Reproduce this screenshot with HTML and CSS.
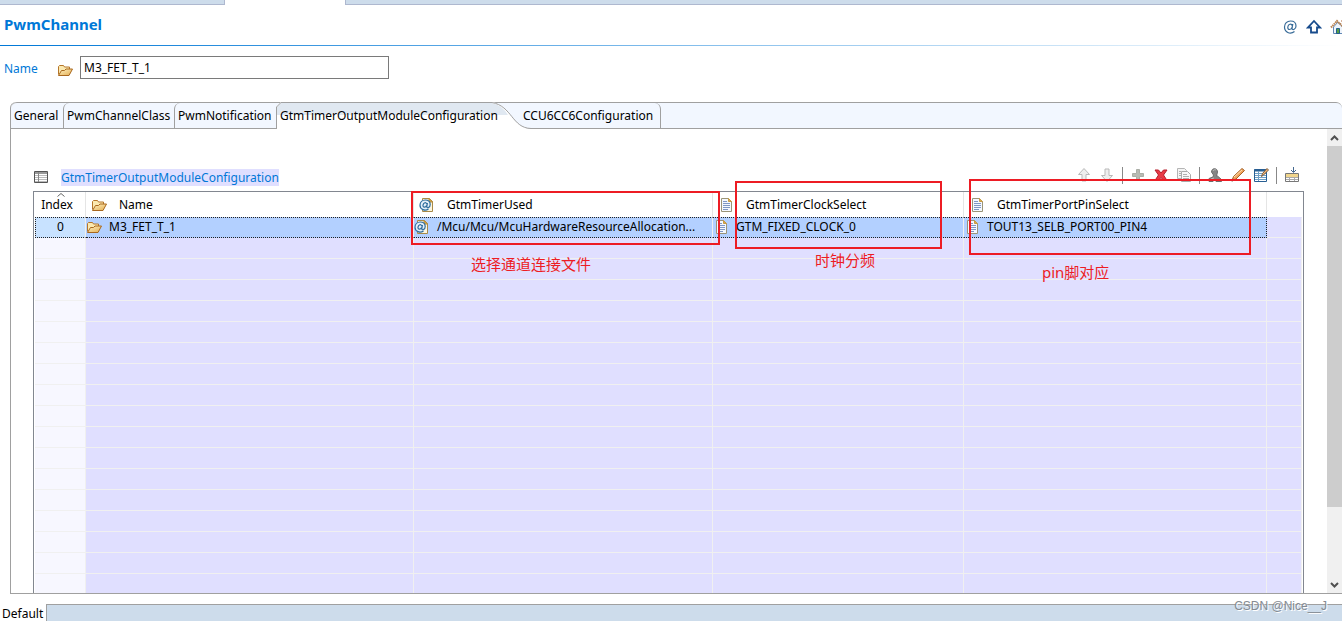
FILE: index.html
```html
<!DOCTYPE html>
<html lang="en">
<head>
<meta charset="utf-8">
<title>PwmChannel</title>
<link rel="stylesheet" href="styles.css">
</head>
<body>
<svg class="defs" aria-hidden="true">
  <defs>
    <linearGradient id="gold" x1="0" y1="0" x2="1" y2="1"><stop offset="0" stop-color="#fff3c4"/><stop offset="1" stop-color="#e3ac50"/></linearGradient>
  </defs>
  <symbol id="folder" viewBox="0 0 16 16">
    <path d="M1.500 12.500v-8l1-1h4l1 1.500h5v3" fill="#fbe9b0" stroke="#b5762a"/>
    <path d="M1.500 13.500l3-5h3l1.500-1.500h6.500l-3.500 6.500z" fill="url(#gold)" stroke="#a9681f"/>
  </symbol>
  <symbol id="page" viewBox="0 0 16 16">
    <path d="M3.500 1.500h7l3 3v10h-10z" fill="#f4f8ff" stroke="#9a9478"/>
    <path d="M10.500 1.500v3h3z" fill="#d9ac4c" stroke="#c79b45"/>
    <path d="M5 4.500h4M5 6.500h7M5 8.500h7M5 10.500h7M5 12.500h5" stroke="#7f97c4" fill="none"/>
  </symbol>
  <symbol id="ref" viewBox="0 0 16 16">
    <path d="M3.500 1.500h7l3 3v10h-10z" fill="#fdf6df" stroke="#a88a48"/>
    <path d="M10 1.500v3.500h3.500z" fill="#d9ac4c" stroke="#b88b35"/>
    <circle cx="6" cy="8" r="5.500" fill="#e3eff8"/>
    <path d="M9.500 12C6 14.500 1 12.500 1 8.300 1 5 3.300 3 6.200 3c3 0 5 1.800 5 4.500 0 3-3.200 4.300-3.400 2.200l.6-3.700M7.900 7.200C7.200 4.600 4.400 5.600 4 8.100c-.3 2.700 2.700 2.700 3.600.4" fill="none" stroke="#2d6c9c" stroke-width="1.200"/>
  </symbol>
</svg>

<div class="editor-tabs"><span class="editor-tab first"></span><span class="editor-tab rest"></span></div>

<header class="header">
  <h1>PwmChannel</h1>
  <nav class="nav">
    <button class="tool" aria-label="Reference"><svg viewBox="0 0 16 16"><path d="M12.500 12.500C8 16 2.500 13 2.500 8c0-3.500 2.600-6 6-6 3.500 0 5.500 2 5.500 5 0 3.200-3.500 4.800-4 2.500l.8-4.500M10.300 7C9.500 4 6.200 5 5.800 8c-.4 3.300 3.300 3.200 4.300.4" fill="none" stroke="#386b98" stroke-width="1.200"/></svg></button>
    <button class="tool" aria-label="Up"><svg viewBox="0 0 16 16"><path d="M8 2L14 8.500h-3v5H5v-5H2z" fill="#fff" stroke="#174b8c" stroke-width="1.800"/></svg></button>
    <button class="tool" aria-label="Home"><svg viewBox="0 0 16 16"><path d="M3.500 8v6.500h9V8L8 3z" fill="#eef4fb" stroke="#6288b5"/><path d="M11 2h2v4" stroke="#b06a45" fill="none"/><path d="M1 8.500L7 2l7 6.500" fill="none" stroke="#b98352" stroke-width="2" stroke-dasharray="1.500 .6"/><path d="M6.500 9.500h3v5h-3z" fill="#56a044" stroke="#245f8d"/></svg></button>
  </nav>
</header>

<div class="name-row">
  <label for="name">Name</label>
  <svg class="icon"><use href="#folder"/></svg>
  <input id="name" type="text" value="M3_FET_T_1">
</div>

<main class="folder">
  <div class="tabs" role="tablist">
    <button class="tab general" role="tab">General</button>
    <button class="tab class" role="tab">PwmChannelClass</button>
    <button class="tab notification" role="tab">PwmNotification</button>
    <button class="tab active" role="tab" aria-selected="true">
      <svg class="curve" viewBox="0 0 255 27">
        <path d="M0 27V5L5 0H216C236 4 236 26 255 26.500V27z" fill="#fff"/>
        <path d="M1 13V5L5 1H216Q226 3 232 13z" fill="#e0e8f1"/>
        <path d="M.5 27V5L5 .5H216C236 4 236 26 255 26.500" fill="none" stroke="#a0a0a0"/>
      </svg>
      <span>GtmTimerOutputModuleConfiguration</span>
    </button>
    <button class="tab ccu" role="tab">CCU6CC6Configuration</button>
  </div>

  <div class="body">
    <section class="panel">
      <div class="section-head">
        <svg class="icon" viewBox="0 0 16 16"><path d="M1.500 2.500h13v11h-13z" fill="#fff" stroke="#555"/><path d="M2 4h12" stroke="#999" stroke-width="2"/><path d="M2 6.500h12M2 8.500h12M2 10.500h12M2 12.500h12" stroke="#bbb"/><path d="M5.500 3v10" stroke="#888"/></svg>
        <h2><a href="#config">GtmTimerOutputModuleConfiguration</a></h2>
        <div class="toolbar">
          <button class="tool" aria-label="Move up"><svg viewBox="0 0 16 16"><path d="M8 1.500l5.500 6H10v6.500H6V7.500H2.500z" fill="#eee" stroke="#b9b9b9"/></svg></button>
          <button class="tool" aria-label="Move down"><svg viewBox="0 0 16 16"><path d="M8 14.500l5.500-6H10V2H6v6.500H2.500z" fill="#eee" stroke="#b9b9b9"/></svg></button>
          <i class="sep"></i>
          <button class="tool" aria-label="Add"><svg viewBox="0 0 16 16"><path d="M6.500 2.500h3v4h4v3h-4v4h-3v-4h-4v-3h4z" fill="#b7bab3" stroke="#aaaea6"/></svg></button>
          <button class="tool" aria-label="Delete"><svg viewBox="0 0 16 16"><path d="M2 3h3.500L8 6l2.500-3H14l-3.500 5 3.500 5.500h-3.500L8 10.500l-2.500 3H2L5.500 8z" fill="#e83b46" stroke="#b71f2c"/></svg></button>
          <button class="tool" aria-label="Copy"><svg viewBox="0 0 16 16"><path d="M1.500 1.500h7l2 2v8h-9z" fill="#f4f4f4" stroke="#b5b5b5"/><path d="M5.500 4.500h6l3 3v7h-9z" fill="#f8f8f8" stroke="#aaa"/><path d="M3 4.500h2M3 6.500h2M3 8.500h2M7 7.500h4M7 9.500h6M7 11.500h6" stroke="#b0b0b0"/></svg></button>
          <i class="sep"></i>
          <button class="tool" aria-label="Stamp"><svg viewBox="0 0 16 16"><path d="M4.500 5c0-4.500 6-4.500 6 0L9.500 9h1l4 3.500v2H9l-1-2-2 2H2v-3l4-1.500L6.500 8z" fill="#858585" stroke="#6d6d6d"/><path d="M6 4c1-1.500 2-1.500 3-1M4 12l3-1" stroke="#bbb" fill="none"/></svg></button>
          <button class="tool" aria-label="Edit"><svg viewBox="0 0 16 16"><path d="M2 14l1.500-4.500L12 1.500l2.500 2L6 12z" fill="#efa45c" stroke="#a66228"/><path d="M4 10l8-7" stroke="#ffdfb4"/><path d="M1.500 14.500l1-3 2 2z" fill="#333"/></svg></button>
          <button class="tool" aria-label="Edit table"><svg viewBox="0 0 16 16"><path d="M1.500 2.500h12v12h-12z" fill="#fff" stroke="#285f93"/><path d="M1 3.500h13" stroke="#285f93" stroke-width="2"/><path d="M2 6.500h11M2 8.500h11M2 10.500h11M2 12.500h11M5.500 4v10" stroke="#6f9fc6"/><path d="M8.500 9.500l1-3 4.500-5 1.500 1.500-5 5z" fill="#f5b777" stroke="#7c5b3b"/></svg></button>
          <i class="sep"></i>
          <button class="tool" aria-label="Insert row"><svg viewBox="0 0 16 16"><path d="M1.500 6.500h13v8h-13z" fill="#fff" stroke="#777"/><path d="M2 8.500h12" stroke="#f0d58c" stroke-width="3"/><path d="M2 10.500h12M2 12.500h12M5.500 10v4M10.500 10v4" stroke="#aaa"/><path d="M9.500 0v5M7 3l2.500 2.500L12 3" fill="none" stroke="#44688f"/></svg></button>
        </div>
      </div>

      <div class="grid-wrap" id="config">
        <table class="grid">
          <colgroup><col class="c-index"><col class="c-name"><col class="c-used"><col class="c-clock"><col class="c-port"><col></colgroup>
          <thead>
            <tr>
              <th class="index">Index<svg class="sort" viewBox="0 0 8 4"><path d="M.5 3.500L4 .5l3.500 3" fill="none" stroke="#666"/></svg></th>
              <th><div class="cell"><svg class="icon"><use href="#folder"/></svg>Name</div></th>
              <th><div class="cell"><svg class="icon"><use href="#ref"/></svg>GtmTimerUsed</div></th>
              <th><div class="cell"><svg class="icon"><use href="#page"/></svg>GtmTimerClockSelect</div></th>
              <th><div class="cell"><svg class="icon"><use href="#page"/></svg>GtmTimerPortPinSelect</div></th>
              <th></th>
            </tr>
          </thead>
          <tbody>
            <tr class="selected">
              <td class="index">0</td>
              <td><div class="cell"><svg class="icon"><use href="#folder"/></svg>M3_FET_T_1</div></td>
              <td><div class="cell"><svg class="icon"><use href="#ref"/></svg>/Mcu/Mcu/McuHardwareResourceAllocation...</div></td>
              <td><div class="cell"><svg class="icon"><use href="#page"/></svg>GTM_FIXED_CLOCK_0</div></td>
              <td><div class="cell"><svg class="icon"><use href="#page"/></svg>TOUT13_SELB_PORT00_PIN4</div></td>
              <td></td>
            </tr>
            <tr><td></td><td></td><td></td><td></td><td></td><td></td></tr>
            <tr><td></td><td></td><td></td><td></td><td></td><td></td></tr>
            <tr><td></td><td></td><td></td><td></td><td></td><td></td></tr>
            <tr><td></td><td></td><td></td><td></td><td></td><td></td></tr>
            <tr><td></td><td></td><td></td><td></td><td></td><td></td></tr>
            <tr><td></td><td></td><td></td><td></td><td></td><td></td></tr>
            <tr><td></td><td></td><td></td><td></td><td></td><td></td></tr>
            <tr><td></td><td></td><td></td><td></td><td></td><td></td></tr>
            <tr><td></td><td></td><td></td><td></td><td></td><td></td></tr>
            <tr><td></td><td></td><td></td><td></td><td></td><td></td></tr>
            <tr><td></td><td></td><td></td><td></td><td></td><td></td></tr>
            <tr><td></td><td></td><td></td><td></td><td></td><td></td></tr>
            <tr><td></td><td></td><td></td><td></td><td></td><td></td></tr>
            <tr><td></td><td></td><td></td><td></td><td></td><td></td></tr>
            <tr><td></td><td></td><td></td><td></td><td></td><td></td></tr>
            <tr><td></td><td></td><td></td><td></td><td></td><td></td></tr>
            <tr><td></td><td></td><td></td><td></td><td></td><td></td></tr>
          </tbody>
        </table>
      </div>
      <div class="mark mark-used"></div>
      <div class="mark mark-clock"></div>
      <div class="mark mark-port"></div>
      <p class="note note-used">选择通道连接文件</p>
      <p class="note note-clock">时钟分频</p>
      <p class="note note-port">pin脚对应</p>
    </section>

    <div class="scrollbar">
      <button class="arrow" aria-label="Scroll up"><svg viewBox="0 0 9 6"><path d="M1 5l3.500-3.500L8 5" fill="none" stroke="#505050" stroke-width="2"/></svg></button>
      <div class="track"><div class="thumb"></div></div>
      <button class="arrow" aria-label="Scroll down"><svg viewBox="0 0 9 6"><path d="M1 1l3.500 3.500L8 1" fill="none" stroke="#505050" stroke-width="2"/></svg></button>
    </div>
  </div>
</main>

<footer class="footer">
  <button class="page-tab">Default</button>
  <div class="filler"></div>
  <span class="watermark">CSDN @Nice__J</span>
</footer>
</body>
</html>
```
FILE: styles.css
```css
* { box-sizing: border-box; }

body {
  margin: 0;
  height: 100vh;
  display: flex;
  flex-direction: column;
  overflow: hidden;
  background: #fff;
  color: #000;
  font: 12px/18px "Noto Sans", "Noto Sans CJK SC", sans-serif;
}

button {
  margin: 0;
  padding: 0;
  border: 0;
  background: none;
  color: inherit;
  font: inherit;
}

h1, h2, p { margin: 0; }
.defs { position: absolute; width: 0; height: 0; }
.icon { width: 16px; height: 16px; flex: none; }

.editor-tabs { display: flex; height: 5px; flex: none; gap: 120px; }
.editor-tab { background: #cddceb; border-bottom: 1px solid #aeb8cf; }
.first { width: 225px; border-right: 1px solid #aeb8cf; }
.rest { flex: 1; border-left: 1px solid #aeb8cf; }

.header {
  height: 41px;
  flex: none;
  display: flex;
  justify-content: space-between;
  align-items: center;
  padding-left: 4px;
  overflow: hidden;
  border-bottom: 1px solid;
  border-image: linear-gradient(90deg, #0078d7, #fff) 1;
}
.header h1 { padding-bottom: 2px; color: #0078d7; font-size: 15px; line-height: 20px; }
.nav { display: flex; gap: 8px; margin-right: -4px; padding-top: 4px; }
.tool { width: 16px; height: 16px; flex: none; }
.tool svg { display: block; width: 16px; height: 16px; }

.name-row {
  height: 56px;
  flex: none;
  display: flex;
  align-items: center;
  padding-left: 4px;
}
.name-row label { width: 53px; color: #0078d7; }
.name-row input {
  width: 309px;
  height: 23px;
  margin: 0 0 13px 7px;
  padding: 0 3px 1px;
  border: 1px solid #7a7a7a;
  border-radius: 0;
  background: #fff;
  color: #000;
  font: inherit;
}
.name-row label { margin-bottom: 10px; }
.name-row .icon { margin-bottom: 9px; }

.folder {
  flex: 1;
  min-height: 0;
  display: flex;
  flex-direction: column;
  margin-left: 10px;
  border-left: 1px solid #a0a0a0;
  border-bottom: 1px solid #a0a0a0;
  border-top-left-radius: 6px;
}
.tabs {
  height: 27px;
  flex: none;
  display: flex;
  border-top: 1px solid #a0a0a0;
  border-bottom: 1px solid #a0a0a0;
  border-radius: 6px 6px 0 0;
  background: #f2f7ff;
}
.tab {
  height: 25px;
  flex: none;
  padding: 0 0 0 3px;
  text-align: left;
  white-space: nowrap;
  border-left: 1px solid #a0a0a0;
  border-top-left-radius: 6px;
}
.general { width: 52px; border-left: 0; }
.class { width: 111px; }
.notification { width: 102px; }
.active { position: relative; width: 244px; padding-left: 4px; border: 0; }
.active span { position: relative; }
.curve { position: absolute; left: 0; top: -1px; width: 255px; height: 27px; }
.ccu {
  width: 141px;
  border-left: 0;
  border-right: 1px solid #a0a0a0;
  border-radius: 0 6px 0 0;
  position: relative;
}

.body { flex: 1; min-height: 0; display: flex; }
.panel {
  flex: 1;
  min-width: 0;
  position: relative;
  display: flex;
  flex-direction: column;
  padding: 36px 23px 0 22px;
  overflow: hidden;
}
.section-head { display: flex; align-items: center; height: 26px; flex: none; padding-bottom: 2px; }
.section-head h2 { margin-left: 12px; font-size: 12px; font-weight: 400; }
.section-head a {
  display: block;
  background: #e0dfff;
  color: #0078d7;
  line-height: 17px;
  text-decoration: none;
}
.toolbar { display: flex; gap: 7px; margin: 0 4px 4px auto; }
.sep { width: 1px; height: 17px; background: #888; }

.grid-wrap {
  flex: 1;
  min-height: 0;
  overflow: hidden;
  padding: 0 1px;
  border: 1px solid #828790;
  border-bottom: 0;
}
.grid { width: 100%; table-layout: fixed; border-collapse: separate; border-spacing: 0; }
.c-index { width: 51px; }
.c-name { width: 328px; }
.c-used { width: 299px; }
.c-clock { width: 251px; }
.c-port { width: 303px; }
.grid th {
  position: relative;
  height: 25px;
  padding: 0;
  border-right: 1px solid #e5e5e5;
  font-weight: 400;
  text-align: left;
}
.grid th:last-child { border-right: 0; }
.grid td {
  height: 21px;
  padding: 0;
  background: #e0dfff;
  border-right: 1px solid #f0f0f0;
  border-bottom: 1px solid #f0f0f0;
}
.grid td:first-child { background: #f7f7ff; }
.grid .index { text-align: center; }
.grid th.index { padding-right: 6px; }
.sort { position: absolute; left: 22px; top: 1px; width: 8px; height: 4px; }
.cell { display: flex; align-items: center; white-space: nowrap; overflow: hidden; }
th .cell { gap: 12px; padding-left: 5px; }
td .cell { gap: 7px; }
.grid .selected td {
  padding-bottom: 1px;
  background: #b3d0ff;
  border-top: 1px dotted #222;
  border-bottom: 1px dotted #222;
}
.grid .selected td:first-child { background: #c8e2ff; border-left: 1px dotted #222; }
.grid .selected td:nth-child(5) { border-right: 1px dotted #222; }
.grid .selected td:last-child { background: #e0dfff; border-top-color: #e0dfff; border-bottom: 1px solid #f0f0f0; }

.mark { position: absolute; border: 2px solid #ed1c24; }
.mark-used { left: 400px; top: 62px; width: 309px; height: 54px; }
.mark-clock { left: 724px; top: 52px; width: 207px; height: 68px; }
.mark-port { left: 958px; top: 50px; width: 282px; height: 76px; }
.note { position: absolute; color: #ed1c24; font-size: 15px; line-height: 20px; white-space: nowrap; }
.note-used { left: 460px; top: 125px; }
.note-clock { left: 804px; top: 121px; }
.note-port { left: 1031px; top: 133px; }

.scrollbar { width: 15px; flex: none; display: flex; flex-direction: column; background: #f0f0f0; }
.arrow { height: 17px; flex: none; display: flex; align-items: center; justify-content: center; }
.arrow svg { width: 9px; height: 6px; }
.track { flex: 1; }
.thumb { height: 84%; background: #cdcdcd; }

.footer { position: relative; display: flex; flex: none; height: 17px; margin-top: 10px; }
.page-tab { width: 46px; padding-left: 2px; text-align: left; line-height: 20px; }
.filler { flex: 1; background: #cddceb; border-top: 1px solid #a0a0a0; border-left: 1px solid #a0a0a0; }
.watermark {
  position: absolute;
  right: 15px;
  top: -7px;
  color: #858b92;
  font: 12px/18px "Liberation Sans", sans-serif;
  text-shadow: 1px 1px #fff;
}
```
